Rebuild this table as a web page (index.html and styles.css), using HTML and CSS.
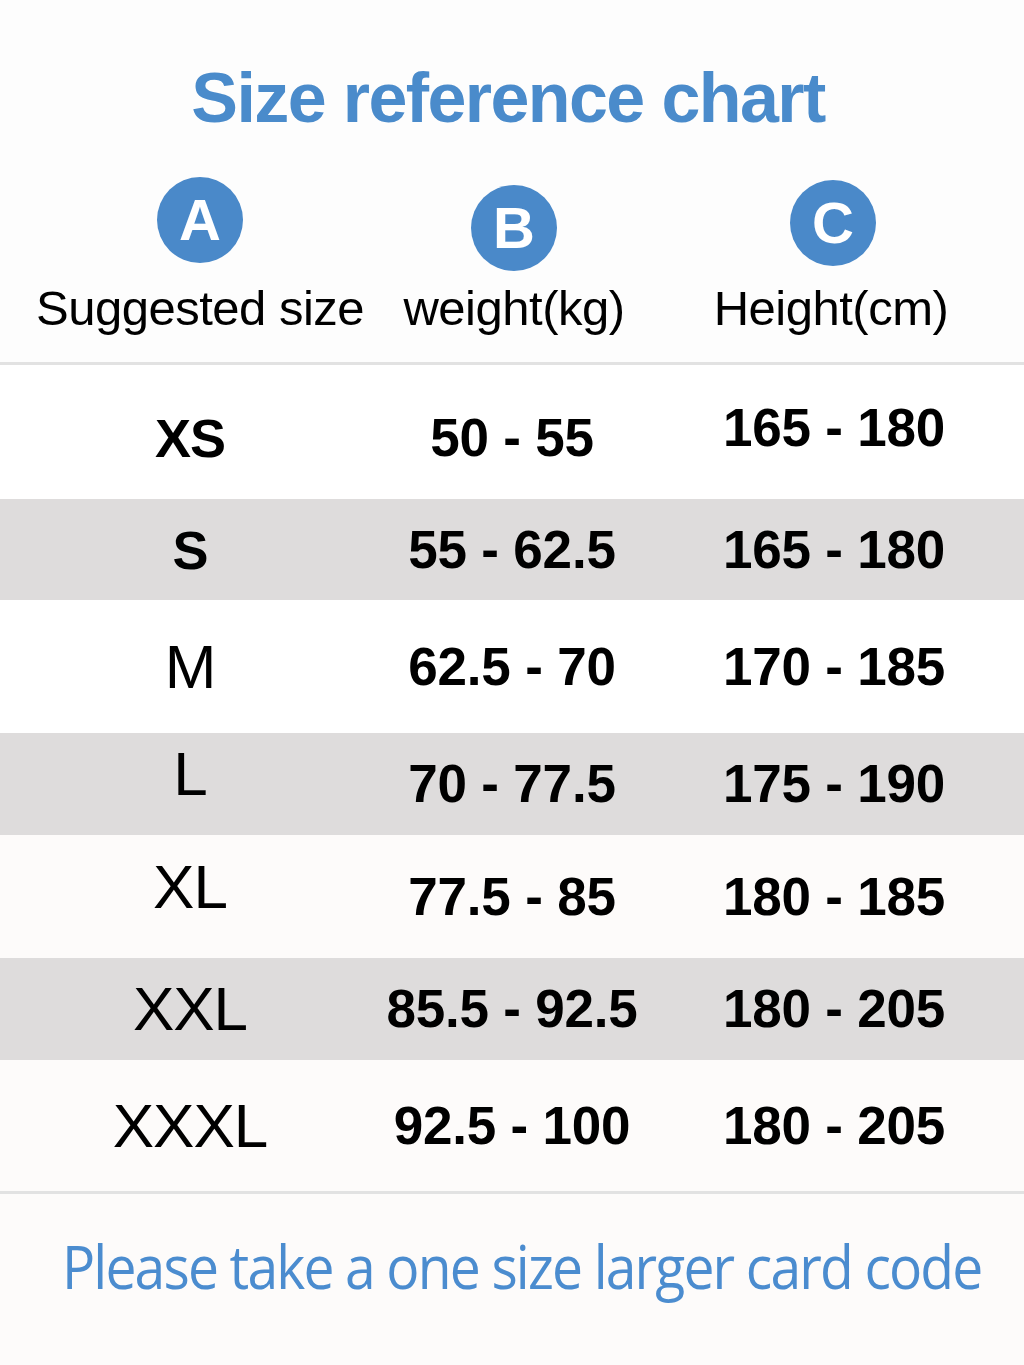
FILE: index.html
```html
<!DOCTYPE html>
<html lang="en">
<head>
<meta charset="utf-8">
<title>Size reference chart</title>
<link rel="stylesheet" href="styles.css">
</head>
<body>
<main class="chart">
  <h1 class="title">Size reference chart</h1>
  <div class="heads">
    <div class="head">
      <div class="badge badge-a">A</div>
      <div class="label label-a">Suggested size</div>
    </div>
    <div class="head">
      <div class="badge badge-b">B</div>
      <div class="label">weight(kg)</div>
    </div>
    <div class="head">
      <div class="badge badge-c">C</div>
      <div class="label">Height(cm)</div>
    </div>
  </div>
  <div class="rule"></div>
  <div class="rows">
    <div class="row row-xs white"><span class="size bold size-lo">XS</span><span class="num size-lo">50 - 55</span><span class="num num-hi">165 - 180</span></div>
    <div class="row row-s grey"><span class="size bold">S</span><span class="num">55 - 62.5</span><span class="num num-left">165 - 180</span></div>
    <div class="row row-m white"><span class="size">M</span><span class="num">62.5 - 70</span><span class="num">170 - 185</span></div>
    <div class="row row-l grey"><span class="size size-hi">L</span><span class="num">70 - 77.5</span><span class="num">175 - 190</span></div>
    <div class="row row-xl warm"><span class="size size-hi">XL</span><span class="num">77.5 - 85</span><span class="num">180 - 185</span></div>
    <div class="row row-xxl grey"><span class="size">XXL</span><span class="num">85.5 - 92.5</span><span class="num">180 - 205</span></div>
    <div class="row row-xxxl warm"><span class="size">XXXL</span><span class="num">92.5 - 100</span><span class="num">180 - 205</span></div>
  </div>
  <div class="rule"></div>
  <footer class="note">
    <p class="note-text">Please take a one size larger card code</p>
  </footer>
</main>
</body>
</html>
```

FILE: styles.css
```css
html, body {
  margin: 0;
  padding: 0;
}

body {
  background: #fdfdfd;
  font-family: "Liberation Sans", Arial, sans-serif;
  color: #000;
}

.chart {
  width: 1024px;
  height: 1365px;
  overflow: hidden;
}

.title {
  margin: 0;
  padding-top: 58px;
  box-sizing: border-box;
  height: 160px;
  font-size: 70px;
  line-height: 80px;
  font-weight: 700;
  color: #4a8bcb;
  text-align: center;
  letter-spacing: -1.6px;
  padding-right: 8px;
}

.heads {
  display: grid;
  grid-template-columns: 390px 248px 386px;
  height: 202px;
}

.head {
  display: grid;
  grid-template-rows: 120px 56px;
  justify-items: center;
}

.badge {
  width: 86px;
  height: 86px;
  border-radius: 50%;
  background: #4a89c9;
  color: #fff;
  font-weight: 700;
  font-size: 58px;
  line-height: 86px;
  text-align: center;
}

.badge-a { margin-top: 17px; margin-left: 10px; }
.badge-b { margin-top: 25px; }
.badge-c { margin-top: 20px; margin-left: 4px; }

.label {
  font-size: 49px;
  line-height: 56px;
  letter-spacing: -0.5px;
  white-space: nowrap;
}

.label-a { margin-left: 10px; }

.rule {
  height: 3px;
  background: #e2e2e2;
}

.rows {
  display: flex;
  flex-direction: column;
}

.row {
  display: grid;
  grid-template-columns: 380px 264px 380px;
  align-items: center;
  justify-items: center;
}

.row-xs { height: 134px; }
.row-s { height: 101px; }
.row-m { height: 133px; }
.row-l { height: 102px; }
.row-xl { height: 123px; }
.row-xxl { height: 102px; }
.row-xxxl { height: 131px; }

.white { background: #ffffff; }
.grey { background: #dedcdc; }
.warm { background: #fdfbfa; }

.size {
  font-size: 62px;
  line-height: 70px;
  letter-spacing: -1px;
  white-space: nowrap;
}

.size.bold {
  font-weight: 700;
  font-size: 54px;
}

.num {
  font-weight: 700;
  font-size: 53px;
  line-height: 70px;
  letter-spacing: -0.2px;
  white-space: nowrap;
}

.size-lo { margin-top: 12px; }
.num-hi { margin-bottom: 8px; }
.size-hi { margin-bottom: 20px; }

.note {
  background: #fdfbfa;
  height: 171px;
  display: flex;
  align-items: center;
  justify-content: center;
  padding-bottom: 28px;
  padding-left: 20px;
  box-sizing: border-box;
}

.note-text {
  margin: 0;
  font-family: "Open Sans", "Noto Sans", sans-serif;
  font-size: 60px;
  line-height: 80px;
  color: #4b8ccf;
  white-space: nowrap;
  letter-spacing: -2px;
  transform: scaleX(0.92);
}
```
